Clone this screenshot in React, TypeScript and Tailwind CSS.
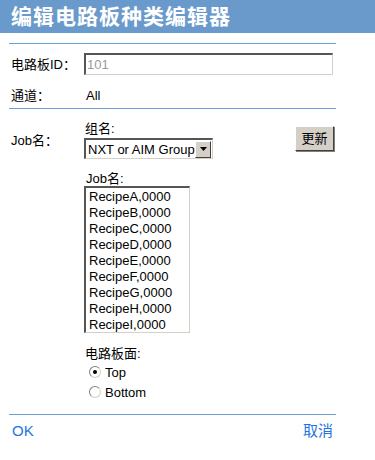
import React, { useState } from 'react';

const recipes = ['A', 'B', 'C', 'D', 'E', 'F', 'G', 'H', 'I'].map((l) => `Recipe${l},0000`);

const font = { fontFamily: '"Liberation Sans", "Noto Sans CJK SC", sans-serif' };

const App: React.FC = () => {
  const [side, setSide] = useState<'top' | 'bottom'>('top');

  return (
    <div className="w-[375px] h-[460px] bg-white text-black text-[13px] leading-[15px]" style={font}>
      {/* Title bar */}
      <div className="h-[33px] bg-[#6a9acb] pl-[11px] flex items-center text-white text-[21px] font-bold tracking-[1px]">
        编辑电路板种类编辑器
      </div>

      <div className="ml-[9px] w-[327px]">
        <div className="mt-[10px] h-px bg-[#6aa0d8]" />

        {/* Board ID */}
        <div className="mt-[9px] flex items-center">
          <span className="w-[75px] pl-[2px]">电路板ID：</span>
          <div className="w-[249px] h-[22px] border-t-2 border-l-2 border-t-[#555] border-l-[#555] border-r border-b border-r-[#d4d0c8] border-b-[#d4d0c8] flex items-center pl-[1px] text-[#9a9a9a]">
            101
          </div>
        </div>

        {/* Channel */}
        <div className="h-[20px] mt-[10px] flex items-center">
          <span className="w-[77px] pl-[2px]">通道：</span>
          <span>All</span>
        </div>

        <div className="mt-[3px] h-px bg-[#6aa0d8]" />

        {/* Job section */}
        <div className="flex mt-[12px]">
          <div className="w-[75px] pl-[2px] pt-[12px]">Job名：</div>

          <div className="flex flex-col w-[140px]">
            <span className="pl-[1px]">组名:</span>
            <div className="mt-[2px] w-[129px] h-[21px] border-t-2 border-l-2 border-t-[#555] border-l-[#555] border-r border-b border-r-[#d4d0c8] border-b-[#d4d0c8] flex items-center">
              <span className="flex-1 pl-[2px] whitespace-nowrap">NXT or AIM Group</span>
              <div className="w-[16px] h-[17px] mr-[1px] bg-[#d4d0c8] border border-t-white border-l-white border-r-[#404040] border-b-[#404040] flex items-center justify-center">
                <svg width="7" height="4" viewBox="0 0 7 4">
                  <path d="M0 0h7L3.5 4z" fill="#000" />
                </svg>
              </div>
            </div>

            <span className="mt-[12px] pl-[2px]">Job名:</span>
            <div className="w-[106px] h-[147px] border-t-2 border-l-2 border-t-[#555] border-l-[#555] border-r border-b border-r-[#d4d0c8] border-b-[#d4d0c8]">
              {recipes.map((r) => (
                <div key={r} className="h-[16px] pl-[3px] flex items-center whitespace-nowrap">
                  {r}
                </div>
              ))}
            </div>

            <span className="mt-[13px] pl-[1px]">电路板面:</span>
            <div className="mt-[4px] flex flex-col gap-[6px] pl-[5px]">
              {(['top', 'bottom'] as const).map((v) => (
                <label key={v} className="flex items-center gap-[4px] cursor-pointer" onClick={() => setSide(v)}>
                  <span className="w-[12px] h-[12px] rounded-full border border-[#808080] border-r-[#d4d0c8] border-b-[#d4d0c8] bg-white flex items-center justify-center">
                    {side === v && <span className="w-[4px] h-[4px] rounded-full bg-black" />}
                  </span>
                  <span className="h-[14px] flex items-center">{v === 'top' ? 'Top' : 'Bottom'}</span>
                </label>
              ))}
            </div>
          </div>

          <div className="flex-1 flex justify-end pt-[5px]">
            <button className="w-[39px] h-[25px] bg-[#d4d0c8] border border-t-white border-l-white border-r-[#404040] border-b-[#404040] shadow-[1px_1px_0_#808080] text-[13px] mr-[2px]">
              更新
            </button>
          </div>
        </div>

        <div className="mt-[15px] h-px bg-[#6aa0d8]" />

        <div className="mt-[7px] flex justify-between px-[3px] text-[15px] leading-[18px] text-[#1f74df]">
          <span>OK</span>
          <span>取消</span>
        </div>
      </div>
    </div>
  );
};

export default App;
